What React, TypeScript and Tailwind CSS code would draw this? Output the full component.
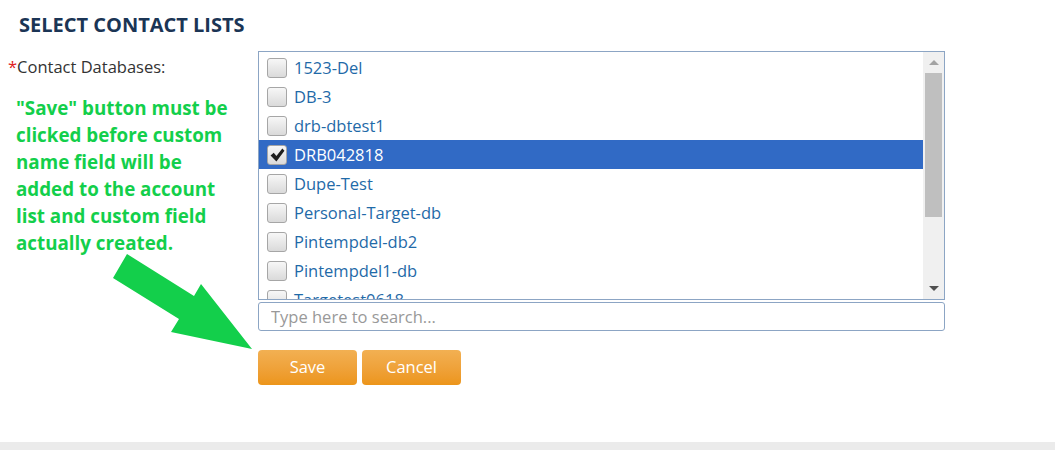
import { useState } from "react";

// Contact list rows shown in the picker
const databases = [
  "1523-Del",
  "DB-3",
  "drb-dbtest1",
  "DRB042818",
  "Dupe-Test",
  "Personal-Target-db",
  "Pintempdel-db2",
  "Pintempdel1-db",
  "Targetest0618",
];

function CheckBox({ checked }: { checked: boolean }) {
  return (
    <span className="flex h-[20px] w-[20px] shrink-0 items-center justify-center rounded-[3px] border border-[#a6a6a6] bg-gradient-to-b from-[#f7f7f7] to-[#dadada]">
      {checked && (
        <svg width="15" height="14" viewBox="0 0 14 13">
          <path d="M0.5 7 L3.5 4.5 L6 7.5 L11.5 0.5 L13.5 2.5 L6 12.5 Z" fill="#1e1e1e" />
        </svg>
      )}
    </span>
  );
}

export default function App() {
  const [selected] = useState("DRB042818");

  return (
    <div className="relative flex h-[450px] w-full flex-col bg-white font-['Open_Sans',sans-serif] text-[#333]">
      {/* Heading */}
      <h2 className="pl-[19px] pt-[10px] text-[20px] font-bold leading-[30px] text-[#1b3555]">
        SELECT CONTACT LISTS
      </h2>

      <div className="mt-[11px] flex">
        {/* Left column */}
        <div className="w-[258px] shrink-0 pl-[8px]">
          <div className="pt-[5px] text-[16.5px] leading-[22px]">
            <span className="text-[#e02020]">*</span>Contact Databases:
          </div>
          <p className="mt-[17px] w-[232px] pl-[8px] text-[18.8px] font-bold leading-[27px] text-[#13cf4b]">
            "Save" button must be clicked before custom name field will be
            added to the account list and custom field actually created.
          </p>
        </div>

        {/* Right column */}
        <div className="w-[687px] shrink-0">
          <div className="flex h-[249px] border border-[#8ca5c4]">
            <div className="flex-1 overflow-hidden pt-[1px]">
              {databases.map((name) => {
                const on = name === selected;
                return (
                  <div
                    key={name}
                    className={
                      on
                        ? "flex h-[29px] items-center gap-[7px] bg-[#316ac5] pl-[8px] text-white"
                        : "flex h-[29px] items-center gap-[7px] pl-[8px] text-[#1f6aa8]"
                    }
                  >
                    <CheckBox checked={on} />
                    <span className="text-[16.5px] leading-[20px]">{name}</span>
                  </div>
                );
              })}
            </div>
            {/* Scrollbar */}
            <div className="flex w-[21px] flex-col items-center bg-[#f0f0f0]">
              <div className="flex h-[21px] items-center justify-center">
                <div className="h-0 w-0 border-x-[5px] border-b-[5px] border-x-transparent border-b-[#a3a3a3]" />
              </div>
              <div className="h-[144px] w-[17px] bg-[#bfbfbf]" />
              <div className="mt-auto flex h-[21px] items-center justify-center">
                <div className="h-0 w-0 border-x-[5px] border-t-[5px] border-x-transparent border-t-[#505050]" />
              </div>
            </div>
          </div>

          <input
            type="text"
            placeholder="Type here to search..."
            className="mt-[2px] h-[29px] w-full rounded-[3px] border border-[#8ca5c4] px-[12px] text-[16.5px] text-[#333] placeholder:text-[#999] focus:outline-none"
          />

          <div className="mt-[19px] flex gap-[5px]">
            <button className="h-[35px] w-[99px] rounded-[4px] bg-gradient-to-b from-[#f2b052] to-[#ec9519] text-[16.5px] text-white">
              Save
            </button>
            <button className="h-[35px] w-[99px] rounded-[4px] bg-gradient-to-b from-[#f2b052] to-[#ec9519] text-[16.5px] text-white">
              Cancel
            </button>
          </div>
        </div>
      </div>

      {/* Pointer arrow drawn over the page */}
      <svg
        className="pointer-events-none absolute left-0 top-0"
        width="1055"
        height="450"
        viewBox="0 0 1055 450"
      >
        <polygon
          points="127,254 194,296 201,284 252,349 171,332 179,319 113,278"
          fill="#13cf4b"
        />
      </svg>

      <div className="mt-auto h-[8px] bg-[#ebebeb]" />
    </div>
  );
}
